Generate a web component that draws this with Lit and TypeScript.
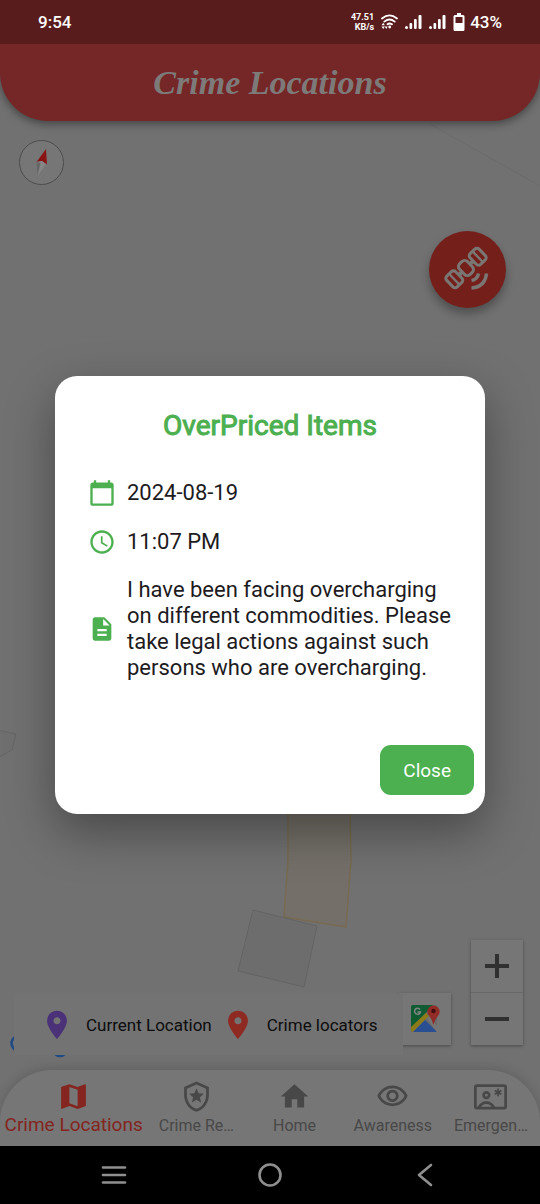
import { LitElement, html, css, svg, nothing } from "lit";
import { customElement, property, state } from "lit/decorators.js";

const icons = {
  calendar: svg`<path d="M20 3h-1V1h-2v2H7V1H5v2H4c-1.1 0-2 .9-2 2v16c0 1.1.9 2 2 2h16c1.1 0 2-.9 2-2V5c0-1.1-.9-2-2-2zm0 18H4V8h16v13z"/>`,
  clock: svg`<path d="M11.99 2C6.47 2 2 6.48 2 12s4.47 10 9.99 10C17.52 22 22 17.52 22 12S17.52 2 11.99 2zM12 20c-4.42 0-8-3.58-8-8s3.58-8 8-8 8 3.58 8 8-3.58 8-8 8zm.5-13H11v6l5.25 3.15.75-1.23-4.5-2.67z"/>`,
  description: svg`<path d="M14 2H6c-1.1 0-1.99.9-1.99 2L4 20c0 1.1.89 2 1.99 2H18c1.1 0 2-.9 2-2V8l-6-6zm2 16H8v-2h8v2zm0-4H8v-2h8v2zm-3-5V3.5L18.5 9H13z"/>`,
  pin: svg`<path d="M12 2C8.13 2 5 5.13 5 9c0 5.25 7 13 7 13s7-7.75 7-13c0-3.87-3.13-7-7-7zm0 9.5c-1.38 0-2.5-1.12-2.5-2.5s1.12-2.5 2.5-2.5 2.5 1.12 2.5 2.5-1.12 2.5-2.5 2.5z"/>`,
  map: svg`<path d="M20.5 3l-.16.03L15 5.1 9 3 3.36 4.9c-.21.07-.36.25-.36.48V20.5c0 .28.22.5.5.5l.16-.03L9 18.9l6 2.1 5.64-1.9c.21-.07.36-.25.36-.48V3.5c0-.28-.22-.5-.5-.5zM15 19l-6-2.11V5l6 2.11V19z"/>`,
  police: svg`<path d="M12 1L3 5v6c0 5.55 3.84 10.74 9 12 5.16-1.26 9-6.45 9-12V5l-9-4zm7 10c0 4.52-2.98 8.69-7 9.93-4.02-1.24-7-5.41-7-9.93V6.3l7-3.11 7 3.11V11z"/><path d="M12 6.2l1.55 3.5 3.8.38-2.86 2.52.83 3.75L12 14.4l-3.32 1.95.83-3.75-2.86-2.52 3.8-.38z"/>`,
  home: svg`<path d="M10 20v-6h4v6h5v-8h3L12 3 2 12h3v8z"/>`,
  eye: svg`<path d="M12 6c3.79 0 7.17 2.13 8.82 5.5C19.17 14.87 15.79 17 12 17s-7.17-2.13-8.82-5.5C4.83 8.13 8.21 6 12 6m0-2C7 4 2.73 7.11 1 11.5 2.73 15.89 7 19 12 19s9.27-3.11 11-7.5C21.27 7.11 17 4 12 4zm0 5c1.38 0 2.5 1.12 2.5 2.5S13.38 14 12 14s-2.5-1.12-2.5-2.5S10.62 9 12 9m0-2c-2.48 0-4.5 2.02-4.5 4.5S9.52 16 12 16s4.5-2.02 4.5-4.5S14.48 7 12 7z"/>`,
  emergency: svg`<g fill="none" stroke="currentColor"><rect x="1" y="4" width="22" height="16.5" rx="1.2" stroke-width="2"/><circle cx="9" cy="11" r="2" stroke-width="2"/><path d="M3.5 20C5 17.3 7 16.4 9 16.4S13 17.3 14.500 20" stroke-width="2"/><path d="M17.500 6.200v5.600M15.100 7.600l4.800 2.800M19.900 7.600l-4.800 2.800" stroke-width="1.300"/></g>`,
};

type IconName = keyof typeof icons;

const icon = (name: IconName) =>
  html`<svg class="icon" viewBox="0 0 24 24" fill="currentColor" aria-hidden="true">${icons[name]}</svg>`;

@customElement("status-bar")
class StatusBar extends LitElement {
  static styles = css`
    :host {
      display: flex;
      align-items: center;
      justify-content: space-between;
      height: 44px;
      padding: 0 38px;
      background: #591c1c;
      color: #fff;
      font-size: 17px;
      font-weight: 500;
      position: relative;
      z-index: 2;
    }
    .right { display: flex; align-items: center; gap: 7px; }
    .rate { font-size: 9px; line-height: 10px; font-weight: 700; text-align: right; }
    svg { display: block; fill: #fff; }
    .pct { margin-left: -2px; }
  `;
  render() {
    const signal = html`<svg width="17" height="16" viewBox="0 0 17 16" aria-hidden="true">
      <circle cx="1.500" cy="13.500" r="1.500"/><rect x="4.500" y="9" width="2.700" height="6" rx="1"/><rect x="9" y="5" width="2.700" height="10" rx="1"/><rect x="13.500" y="1" width="3" height="14" rx="1"/>
    </svg>`;
    return html`
      <span>9:54</span>
      <div class="right">
        <div class="rate">47.51<br />KB/s</div>
        <svg width="17" height="16" viewBox="0 0 17 16" aria-hidden="true">
          <g fill="none" stroke="#fff" stroke-width="1.800" stroke-linecap="round">
            <path d="M1 4.500Q8.500-1.700 16 4.500M3.300 7.600Q8.500 3.400 13.700 7.600M6.500 10.200Q8.500 8.800 11 10.300"/>
          </g>
          <circle cx="8.700" cy="13" r="1.400"/>
          <path d="M2.200 8.800l1.700 2.400H.5zM2.200 15l1.700-2.400H.5zM5.200 15l1.500-2.400H3.800z"/>
        </svg>
        ${signal} ${signal}
        <svg width="12" height="18" viewBox="0 0 12 18" aria-hidden="true">
          <path fill-rule="evenodd" d="M4 0h4v2h2q1.500 0 1.500 1.500v13Q11.500 18 10 18H2Q.5 18 .5 16.500v-13Q.5 2 2 2h2zM2.500 4v6h7V4z"/>
        </svg>
        <span class="pct">43%</span>
      </div>
    `;
  }
}

@customElement("crime-map")
class CrimeMap extends LitElement {
  static styles = css`
    :host { display: flex; flex-direction: column; position: relative; flex: 1; }
    .canvas { position: absolute; inset: 0; width: 100%; height: 100%; }
    button { font: inherit; border: 0; padding: 0; display: grid; place-items: center; background: #767676; color: #303030; }
    .icon { width: 34px; height: 34px; display: block; }
    .top, .side, .bottom { position: relative; display: flex; }
    .top { padding: 19px 19px 0; }
    .compass { width: 45px; height: 45px; border-radius: 50%; border: 1px solid #4d4d4d; }
    .side { justify-content: flex-end; padding: 46px 34px 0; }
    .satellite { width: 77px; height: 77px; border-radius: 50%; background: #751f1a; box-shadow: 0 6px 10px rgba(0, 0, 0, 0.3); }
    .bottom { margin-top: auto; align-items: flex-end; padding: 0 17px 15px 14px; }
    .legend { display: flex; flex: 1; align-items: center; height: 61px; background: #737373; color: #0c0c0c; font-size: 17px; z-index: 1; padding-left: 26px; box-sizing: border-box; }
    .key { display: flex; align-items: center; gap: 12px; margin-right: 9px; white-space: nowrap; }
    .key:last-child { margin-right: 0; }
    .current { color: #4a3178; }
    .crime { color: #8e2a22; }
    .gmaps { width: 52px; height: 52px; margin: 0 20px 10px -4px; box-shadow: 0 1px 3px rgba(0, 0, 0, 0.35); }
    .zoom { display: flex; flex-direction: column; gap: 1px; margin-bottom: 10px; background: #686868; box-shadow: 0 1px 3px rgba(0, 0, 0, 0.35); }
    .zoom button { width: 52px; height: 52px; }
  `;
  render() {
    return html`
      <svg class="canvas" viewBox="0 121 540 949" preserveAspectRatio="xMidYMid slice" aria-hidden="true">
        <path d="M430 124L540 186" stroke="#6b6b6b" fill="none"/>
        <path d="M-2 730L16 734 12 750-2 758" stroke="#666" fill="#6f6f6f"/>
        <path d="M288 800L288 860 284 917 346 927 351 860 350 800z" fill="#747069" stroke="#776a50" stroke-width="1.500"/>
        <path d="M253 910L317 926 304 987 238 971z" fill="#6d6d6d" stroke="#646464"/>
        <path d="M15 1037Q8 1043 15 1050M54 1053Q60 1059 66 1053" stroke="#1e4a86" stroke-width="2.500" fill="none"/>
      </svg>
      <div class="top">
        <button class="compass" aria-label="Reset north">
          <svg width="43" height="43" viewBox="1 1 43 43"><path d="M27 9L17.500 22l5.500-1 5 3.500z" fill="#8a1414"/><path d="M17.500 22l5.500-1 4 3L18.500 36z" fill="#858585"/><path d="M17.500 22l4 1-3 13z" fill="#666"/></svg>
        </button>
      </div>
      <div class="side">
        <button class="satellite" aria-label="Satellite view">
          <svg width="77" height="77" viewBox="0 0 77 77" fill="none" stroke="#7a7674" stroke-width="3">
            <g transform="rotate(-44 37 37)">
              <rect x="14.500" y="29.500" width="12.500" height="15" rx="3"/><path d="M20.750 30v14" stroke-width="2.400"/>
              <rect x="31.500" y="29.500" width="11" height="15" rx="4"/>
              <rect x="47" y="29.500" width="12.500" height="15" rx="3"/><path d="M53.250 30v14" stroke-width="2.400"/>
              <path d="M27 37h4.500M42.500 37h4.500" stroke-width="4"/>
            </g>
            <path d="M42.500 49.500Q48.500 48.500 49.500 42.500M42.500 57Q56 56 57.500 42.500" stroke-width="3.500"/>
          </svg>
        </button>
      </div>
      <div class="bottom">
        <div class="legend">
          <div class="key"><span class="current">${icon("pin")}</span>Current Location</div>
          <div class="key"><span class="crime">${icon("pin")}</span>Crime locators</div>
        </div>
        <button class="gmaps" aria-label="Open in Google Maps">
          <svg width="32" height="32" viewBox="0 0 32 32">
            <path d="M4 2h24v27H4q-2 0-2-2V4q0-2 2-2z" fill="#6b6b6b"/>
            <path d="M4 2h20L2 26V4q0-2 2-2z" fill="#0f5c33"/>
            <path d="M2 24L17 10l3 3L4 29q-2 0-2-2z" fill="#8d7a18"/>
            <path d="M4 29L16 17l12 12z" fill="#2a4e92"/>
            <path d="M18 15l3-3 8 13v3q0 1-1 1z" fill="#777"/>
            <path d="M24.500 22q-1-5-4-8.500a6.200 6.200 0 1 1 8 0q-3 3.500-4 8.500z" fill="#912c26"/>
            <circle cx="24.500" cy="8" r="2.200" fill="#401010"/>
            <path d="M11 6.500A3 3 0 1 0 11.500 9H8.500" fill="none" stroke="#858585" stroke-width="1.500"/>
          </svg>
        </button>
        <div class="zoom">
          <button aria-label="Zoom in"><svg width="24" height="24"><path d="M12 0v24M0 12h24" stroke="#303030" stroke-width="4"/></svg></button>
          <button aria-label="Zoom out"><svg width="24" height="24"><path d="M0 12h24" stroke="#303030" stroke-width="4"/></svg></button>
        </div>
      </div>
    `;
  }
}

interface Tab { icon: IconName; label: string; }

@customElement("tab-bar")
class TabBar extends LitElement {
  @property({ type: Number }) selected = 0;
  private tabs: Tab[] = [
    { icon: "map", label: "Crime Locations" },
    { icon: "police", label: "Crime Re…" },
    { icon: "home", label: "Home" },
    { icon: "eye", label: "Awareness" },
    { icon: "emergency", label: "Emergen…" },
  ];
  static styles = css`
    :host { display: block; }
    nav { display: flex; height: 76px; background: #767676; border-radius: 52px 52px 0 0; box-shadow: 0 -2px 12px rgba(0, 0, 0, 0.14); }
    a { flex: 2 1 0; min-width: 0; display: flex; flex-direction: column; align-items: center; padding-top: 10px; box-sizing: border-box; color: #484848; font-size: 16px; line-height: 26px; text-decoration: none; white-space: nowrap; }
    a.on { flex-grow: 3; color: #84251f; font-size: 19px; line-height: 24px; }
    .icon { width: 33px; height: 33px; display: block; flex: none; }
  `;
  render() {
    return html`<nav>
      ${this.tabs.map((t, i) => html`<a href="#" class=${i === this.selected ? "on" : ""} aria-current=${i === this.selected ? "page" : nothing}>${icon(t.icon)}<span>${t.label}</span></a>`)}
    </nav>`;
  }
}

@customElement("system-nav")
class SystemNav extends LitElement {
  static styles = css`
    :host { display: flex; height: 58px; padding: 0 36px; background: #000; }
    button { flex: 1; display: grid; place-items: center; border: 0; padding: 0; background: none; }
    svg { fill: none; stroke: #8f8f8f; stroke-width: 2.6; stroke-linecap: round; stroke-linejoin: round; }
  `;
  render() {
    return html`
      <button aria-label="Recent apps"><svg width="26" height="26"><path d="M2 5.500h22M2 13h22M2 20.500h22"/></svg></button>
      <button aria-label="Home screen"><svg width="26" height="26"><circle cx="13" cy="13" r="10.500"/></svg></button>
      <button aria-label="Back"><svg width="26" height="26"><path d="M18 3L6 13l12 10"/></svg></button>
    `;
  }
}

@customElement("report-dialog")
class ReportDialog extends LitElement {
  static styles = css`
    :host { display: block; width: 100%; }
    section { background: #fff; border-radius: 22px; padding-top: 33px; box-shadow: 0 18px 48px rgba(0, 0, 0, 0.36); color: #1d1b1e; }
    h2 { margin: 0; text-align: center; color: #4caf50; font-size: 28px; line-height: 34px; font-weight: 400; -webkit-text-stroke: 1px #4caf50; }
    .rows { display: flex; flex-direction: column; gap: 21px; padding: 36px 33px 0; }
    .row { display: flex; align-items: center; gap: 11px; font-size: 22px; line-height: 26px; }
    .row p { margin: 0; }
    .icon { width: 28px; height: 28px; display: block; color: #4caf50; flex: none; }
    .actions { display: flex; justify-content: flex-end; padding: 64px 11px 19px; }
    button { height: 50px; padding: 0 23px; border: 0; border-radius: 11px; background: #4caf50; color: #fff; font: inherit; font-size: 19px; }
  `;
  render() {
    return html`<section role="dialog" aria-labelledby="title">
      <h2 id="title">OverPriced Items</h2>
      <div class="rows">
        <div class="row">${icon("calendar")}<p>2024-08-19</p></div>
        <div class="row">${icon("clock")}<p>11:07 PM</p></div>
        <div class="row">${icon("description")}<p>I have been facing overcharging on different commodities. Please take legal actions against such persons who are overcharging.</p></div>
      </div>
      <div class="actions"><button @click=${() => this.dispatchEvent(new Event("close"))}>Close</button></div>
    </section>`;
  }
}

@customElement("app-root")
class AppRoot extends LitElement {
  @state() private open = true;
  static styles = css`
    :host { display: flex; flex-direction: column; position: relative; min-height: 100vh; background: #717171; font-family: Roboto, "Noto Sans", sans-serif; }
    header { display: grid; place-items: center; height: 77px; background: #752727; border-radius: 0 0 48px 48px; box-shadow: 0 3px 8px rgba(0, 0, 0, 0.4); position: relative; z-index: 1; }
    h1 { margin: 0; font-family: "Liberation Serif", serif; font-style: italic; font-weight: 700; font-size: 34px; line-height: 40px; color: #7d7a7a; }
    .overlay { position: absolute; inset: 0; z-index: 3; display: grid; align-items: center; padding: 0 55px 14px; }
  `;
  render() {
    return html`
      <status-bar></status-bar>
      <header><h1>Crime Locations</h1></header>
      <crime-map></crime-map>
      <tab-bar></tab-bar>
      <system-nav></system-nav>
      ${this.open ? html`<div class="overlay"><report-dialog @close=${() => (this.open = false)}></report-dialog></div>` : nothing}
    `;
  }
}
